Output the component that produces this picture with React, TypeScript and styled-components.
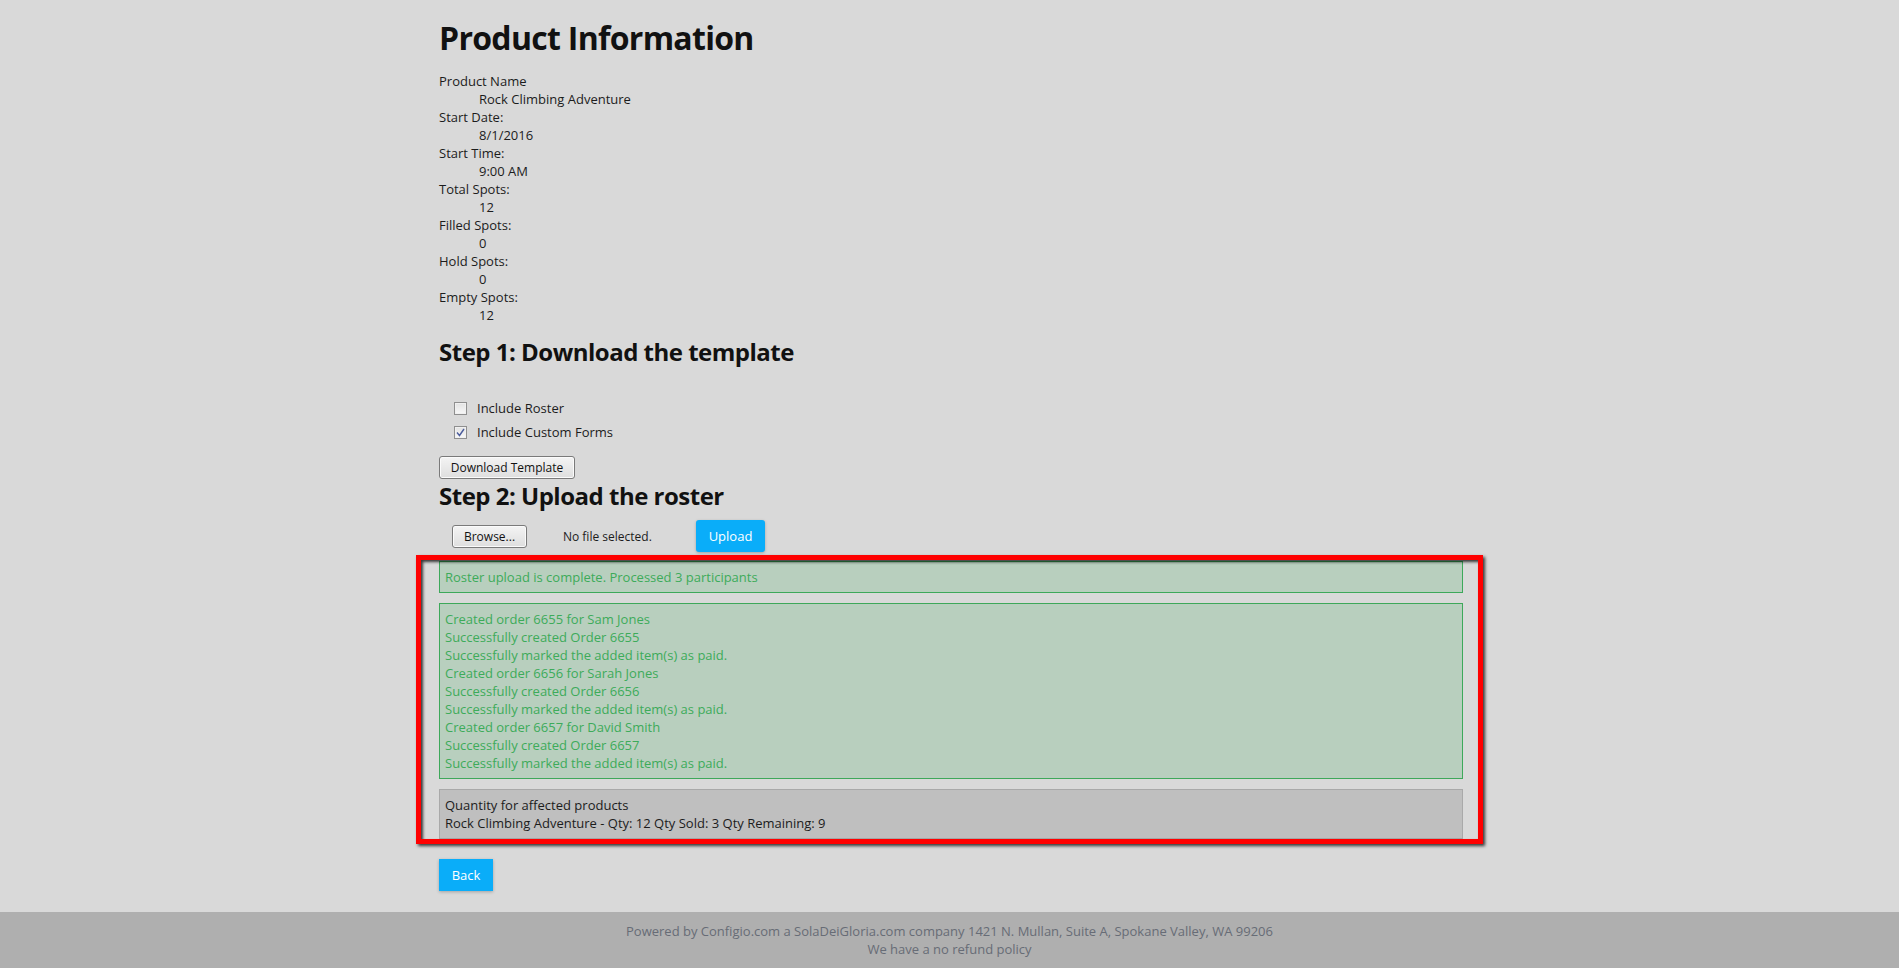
import React from 'react';
import styled, { createGlobalStyle } from 'styled-components';

const GlobalStyle = createGlobalStyle`
  html, body {
    margin: 0;
    padding: 0;
    background-color: #d9d9d9;
    font-family: 'Open Sans', 'Liberation Sans', sans-serif;
    color: #1c1c1c;
  }
  #root {
    min-height: 100vh;
    display: flex;
    flex-direction: column;
  }
`;

const Page = styled.div`
  flex: 1;
  width: 1024px;
  margin: 0 auto;
  padding: 20px 0 19px 3px;
`;

const Title = styled.h1`
  margin: 0 0 17px;
  font-size: 32px;
  line-height: 35px;
  font-weight: 700;
  letter-spacing: -0.7px;
  color: #111;
`;

const StepTitle = styled.h2<{ $gap: number }>`
  margin: 0 0 ${(p) => p.$gap}px;
  font-size: 24px;
  line-height: 26px;
  font-weight: 700;
  letter-spacing: -0.5px;
  color: #111;
`;

const InfoList = styled.dl`
  margin: 0 0 15px;
  font-size: 13px;
  line-height: 18px;
`;

const InfoLabel = styled.dt`
  margin: 0;
`;

const InfoValue = styled.dd`
  margin: 0 0 0 40px;
`;

const OptionList = styled.div`
  display: flex;
  flex-direction: column;
  padding-left: 15px;
  margin-bottom: 12px;
`;

const OptionRow = styled.label`
  display: flex;
  align-items: center;
  height: 24px;
  gap: 10px;
  font-size: 13px;
`;

const CheckBox = styled.span`
  width: 11px;
  height: 11px;
  border: 1px solid #8f8f8f;
  background: linear-gradient(#e2e2e2, #f8f8f8);
  box-shadow: inset 0 0 0 1px #f0f0f0;
  display: flex;
  align-items: center;
  justify-content: center;
`;

const GrayButton = styled.button<{ $width: number; $gap?: number }>`
  display: block;
  flex-shrink: 0;
  width: ${(p) => p.$width}px;
  height: 23px;
  margin: 0 0 ${(p) => p.$gap ?? 0}px;
  padding: 0;
  border: 1px solid #7a7a7a;
  border-radius: 3px;
  background: linear-gradient(#f4f4f4, #dedede);
  font-family: 'Open Sans', 'Liberation Sans', sans-serif;
  font-size: 12px;
  color: #111;
  box-shadow: inset 0 0 0 1px #fbfbfb;
`;

const UploadRow = styled.div`
  display: flex;
  align-items: center;
  height: 32px;
  padding-left: 13px;
  margin-bottom: 9px;
`;

const FileName = styled.span`
  font-size: 12px;
  margin-left: 36px;
  width: 133px;
`;

const BlueButton = styled.button<{ $width: number; $round?: boolean }>`
  display: block;
  flex-shrink: 0;
  width: ${(p) => p.$width}px;
  height: 32px;
  margin: 0;
  border: none;
  border-radius: ${(p) => (p.$round ? '3px' : '0')};
  background: #0aadf9;
  color: #fff;
  font-family: 'Open Sans', 'Liberation Sans', sans-serif;
  font-size: 13px;
  box-shadow: 0 1px 3px rgba(0, 0, 0, 0.25);
  padding: 0;
`;

const Results = styled.div`
  position: relative;
  display: flex;
  flex-direction: column;
  gap: 10px;
  margin-bottom: 20px;
`;

const MessageBox = styled.div<{ $kind: 'success' | 'info' }>`
  border: 1px solid ${(p) => (p.$kind === 'success' ? '#3ea85a' : '#a9a9a9')};
  background: ${(p) => (p.$kind === 'success' ? '#b8cfbe' : '#bfbfbf')};
  color: ${(p) => (p.$kind === 'success' ? '#3dab5a' : '#1c1c1c')};
  padding: 6px 5px;
  font-size: 13px;
  line-height: 18px;
`;

const Highlight = styled.div`
  position: absolute;
  left: -23px;
  right: -20px;
  top: -6px;
  bottom: -5px;
  border: 5px solid #ff0000;
  box-shadow: 2px 2px 3px rgba(0, 0, 0, 0.75), inset 2px 2px 3px rgba(0, 0, 0, 0.75);
  pointer-events: none;
`;

const Footer = styled.footer`
  background: #afafaf;
  height: 56px;
  box-sizing: border-box;
  padding-top: 10px;
  text-align: center;
  font-size: 13px;
  line-height: 18px;
  color: #676c76;
`;

const info = [
  ['Product Name', 'Rock Climbing Adventure'],
  ['Start Date:', '8/1/2016'],
  ['Start Time:', '9:00 AM'],
  ['Total Spots:', '12'],
  ['Filled Spots:', '0'],
  ['Hold Spots:', '0'],
  ['Empty Spots:', '12'],
];

const orderLog = [
  'Created order 6655 for Sam Jones',
  'Successfully created Order 6655',
  'Successfully marked the added item(s) as paid.',
  'Created order 6656 for Sarah Jones',
  'Successfully created Order 6656',
  'Successfully marked the added item(s) as paid.',
  'Created order 6657 for David Smith',
  'Successfully created Order 6657',
  'Successfully marked the added item(s) as paid.',
];

const Check = ({ checked }: { checked: boolean }) => (
  <CheckBox>
    {checked && (
      <svg width="9" height="9" viewBox="0 0 9 9">
        <path d="M1 4.5 L3.5 7.5 L8 1" fill="none" stroke="#4b5c9c" strokeWidth="1.4" />
      </svg>
    )}
  </CheckBox>
);

const App: React.FC = () => {
  return (
    <>
      <GlobalStyle />
      <Page>
        <Title>Product Information</Title>
        <InfoList>
          {info.map(([label, value]) => (
            <React.Fragment key={label}>
              <InfoLabel>{label}</InfoLabel>
              <InfoValue>{value}</InfoValue>
            </React.Fragment>
          ))}
        </InfoList>

        <StepTitle $gap={31}>Step 1: Download the template</StepTitle>
        <OptionList>
          <OptionRow>
            <Check checked={false} />
            Include Roster
          </OptionRow>
          <OptionRow>
            <Check checked />
            Include Custom Forms
          </OptionRow>
        </OptionList>
        <GrayButton $width={136} $gap={4}>Download Template</GrayButton>

        <StepTitle $gap={11}>Step 2: Upload the roster</StepTitle>
        <UploadRow>
          <GrayButton $width={75}>Browse...</GrayButton>
          <FileName>No file selected.</FileName>
          <BlueButton $width={69} $round>Upload</BlueButton>
        </UploadRow>

        <Results>
          <MessageBox $kind="success">Roster upload is complete. Processed 3 participants</MessageBox>
          <MessageBox $kind="success">
            {orderLog.map((line, i) => (
              <div key={i}>{line}</div>
            ))}
          </MessageBox>
          <MessageBox $kind="info">
            <div>Quantity for affected products</div>
            <div>Rock Climbing Adventure - Qty: 12 Qty Sold: 3 Qty Remaining: 9</div>
          </MessageBox>
          <Highlight />
        </Results>

        <BlueButton $width={54}>Back</BlueButton>
      </Page>
      <Footer>
        <div>Powered by Configio.com a SolaDeiGloria.com company 1421 N. Mullan, Suite A, Spokane Valley, WA 99206</div>
        <div>We have a no refund policy</div>
      </Footer>
    </>
  );
};

export default App;
